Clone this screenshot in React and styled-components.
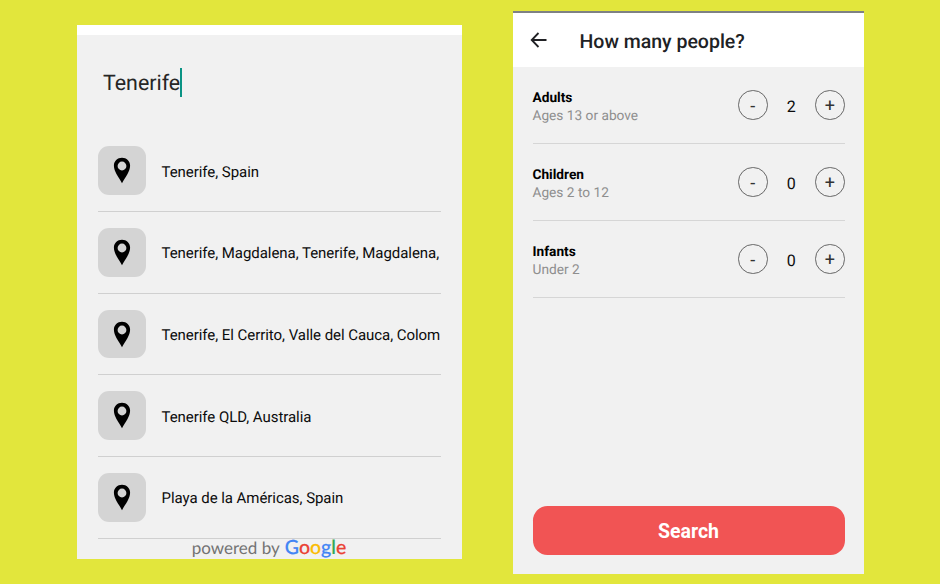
import React, { useState } from "react";
import styled, { createGlobalStyle } from "styled-components";

const GlobalStyle = createGlobalStyle`
  * { box-sizing: border-box; }
  body { margin: 0; background: #e2e63c; }
  button { font: inherit; padding: 0; border: 0; background: none; }
`;

const Page = styled.main`
  display: flex;
  align-items: flex-start;
  gap: 51px;
  width: 940px;
  height: 584px;
  padding: 11px 76px 0 77px;
  overflow: hidden;
  background: #e2e63c;
  font-family: Roboto, "Liberation Sans", sans-serif;
  color: #0c0c0c;
  text-rendering: geometricPrecision;
`;

const SearchScreen = styled.section`
  display: flex;
  flex-direction: column;
  width: 385px;
  height: 534px;
  margin-top: 14px;
  padding: 0 21px;
  border-top: 10.5px solid #fff;
  background: #f1f1f1;
  overflow: hidden;
`;

const SearchField = styled.div`
  display: flex;
  flex: none;
  align-items: center;
  height: 95.3px;
  padding-left: 5px;
  font-size: 21.4px;
  line-height: 26px;
  color: #262626;
`;

const FieldText = styled.span`
  margin-right: -0.7px;
  padding-top: 3px;
`;

const Caret = styled.span`
  width: 2px;
  height: 29px;
  margin-bottom: 1px;
  background: #0a9384;
`;

const PlaceList = styled.ul`
  flex: none;
  margin: 0;
  padding: 0;
  list-style: none;
`;

const PlaceRow = styled.li`
  display: flex;
  align-items: center;
  gap: 16px;
  width: 342.5px;
  height: 81.7px;
  border-bottom: 1px solid #d0d0d0;
`;

const PinTile = styled.span`
  display: flex;
  flex: none;
  align-items: center;
  justify-content: center;
  width: 47.5px;
  height: 48.5px;
  border-radius: 11px;
  background: #d4d4d4;
`;

const PlaceName = styled.span`
  padding-top: 2px;
  white-space: nowrap;
  font-size: 15px;
  line-height: 20px;
  letter-spacing: -0.05px;
`;

const Attribution = styled.div`
  display: flex;
  align-items: baseline;
  justify-content: center;
  gap: 5px;
  margin: -1px 1px 0 0;
  line-height: 20px;
  font-family: Lato, sans-serif;
  font-size: 17px;
  color: #737373;
`;

const Brand = styled.span`
  font-size: 19.5px;
  font-weight: 500;
  -webkit-text-stroke: 0.2px;
`;

const Letter = styled.span`
  color: ${(p) => p.$color};
`;

const GuestsScreen = styled.section`
  display: flex;
  flex-direction: column;
  width: 351px;
  height: 563px;
  border-top: 2px solid #7e8183;
  background: #f1f1f1;
`;

const Header = styled.header`
  display: flex;
  align-items: center;
  gap: 32.5px;
  height: 54px;
  padding-left: 17px;
  background: #fff;
  color: #202124;
`;

const Title = styled.h1`
  margin: 0;
  padding-top: 3px;
  font-size: 19.5px;
  line-height: 24px;
  font-weight: 500;
`;

const GuestList = styled.div`
  padding: 0 19.5px;
`;

const GuestRow = styled.div`
  display: flex;
  align-items: center;
  justify-content: space-between;
  height: 77px;
  border-bottom: 1px solid #d6d6d6;
`;

const Group = styled.div`
  padding-top: 3px;
`;

const GroupName = styled.div`
  font-size: 13.7px;
  line-height: 18px;
  font-weight: 700;
  color: #000;
`;

const GroupAges = styled.div`
  font-size: 13.7px;
  line-height: 18px;
  color: #8e8e8e;
`;

const Counter = styled.div`
  display: flex;
  align-items: center;
`;

const RoundButton = styled.button`
  display: flex;
  align-items: center;
  justify-content: center;
  width: 29.5px;
  height: 29.5px;
  && {
    padding-top: 2px;
    border: 1px solid #676767;
    font-size: 18px;
  }
  border-radius: 50%;
  color: #333;
  line-height: 20px;
`;

const Count = styled.span`
  width: 47.5px;
  padding-top: 3px;
  text-align: center;
  font-size: 16px;
  line-height: 20px;
`;

const SearchButton = styled.button`
  height: 48.5px;
  margin: auto 19.5px 19.5px;
  border-radius: 14.5px;
  && {
    padding-top: 3px;
    background: #f15454;
    font-size: 19.5px;
    font-weight: 700;
  }
  line-height: 24px;
  color: #fff;
`;

const places = [
  "Tenerife, Spain",
  "Tenerife, Magdalena, Tenerife, Magdalena,",
  "Tenerife, El Cerrito, Valle del Cauca, Colom",
  "Tenerife QLD, Australia",
  "Playa de la Américas, Spain",
];

const brandLetters = [
  ["G", "#4285f4"],
  ["o", "#ea4335"],
  ["o", "#fbbc05"],
  ["g", "#4285f4"],
  ["l", "#34a853"],
  ["e", "#ea4335"],
];

const groups = [
  { name: "Adults", ages: "Ages 13 or above", initial: 2 },
  { name: "Children", ages: "Ages 2 to 12", initial: 0 },
  { name: "Infants", ages: "Under 2", initial: 0 },
];

function Pin() {
  return (
    <svg width="18" height="27" viewBox="0 0 18 27" aria-hidden="true">
      <path
        fillRule="evenodd"
        d="M9 .8C4.400.8.900 4.200.900 8.800c0 2.800 1.200 5.600 2.700 8.400C5.300 20.300 7.500 23 9 26.300c1.500-3.300 3.700-6 5.400-9.100 1.500-2.800 2.700-5.600 2.700-8.400C17.100 4.200 13.600.8 9 .8Zm0 3.800a4.400 4.400 0 1 1 0 8.800 4.400 4.400 0 0 1 0-8.800Z"
      />
    </svg>
  );
}

function Guests({ name, ages, initial }) {
  const [count, setCount] = useState(initial);
  return (
    <GuestRow>
      <Group>
        <GroupName>{name}</GroupName>
        <GroupAges>{ages}</GroupAges>
      </Group>
      <Counter>
        <RoundButton onClick={() => setCount(Math.max(0, count - 1))}>-</RoundButton>
        <Count>{count}</Count>
        <RoundButton onClick={() => setCount(count + 1)}>+</RoundButton>
      </Counter>
    </GuestRow>
  );
}

export default function App() {
  return (
    <Page>
      <GlobalStyle />
      <SearchScreen>
        <SearchField>
          <FieldText>Tenerife</FieldText>
          <Caret />
        </SearchField>
        <PlaceList>
          {places.map((name) => (
            <PlaceRow key={name}>
              <PinTile>
                <Pin />
              </PinTile>
              <PlaceName>{name}</PlaceName>
            </PlaceRow>
          ))}
        </PlaceList>
        <Attribution>
          <span>powered by</span>
          <Brand>
            {brandLetters.map(([char, color], i) => (
              <Letter key={i} $color={color}>
                {char}
              </Letter>
            ))}
          </Brand>
        </Attribution>
      </SearchScreen>
      <GuestsScreen>
        <Header>
          <svg width="17" height="16" viewBox="0 0 17 16" fill="none" stroke="currentColor" strokeWidth="1.8" aria-hidden="true">
            <path d="M16.500 8H2M8.500 1 1.700 8l6.800 7" />
          </svg>
          <Title>How many people?</Title>
        </Header>
        <GuestList>
          {groups.map((group) => (
            <Guests key={group.name} {...group} />
          ))}
        </GuestList>
        <SearchButton>Search</SearchButton>
      </GuestsScreen>
    </Page>
  );
}
